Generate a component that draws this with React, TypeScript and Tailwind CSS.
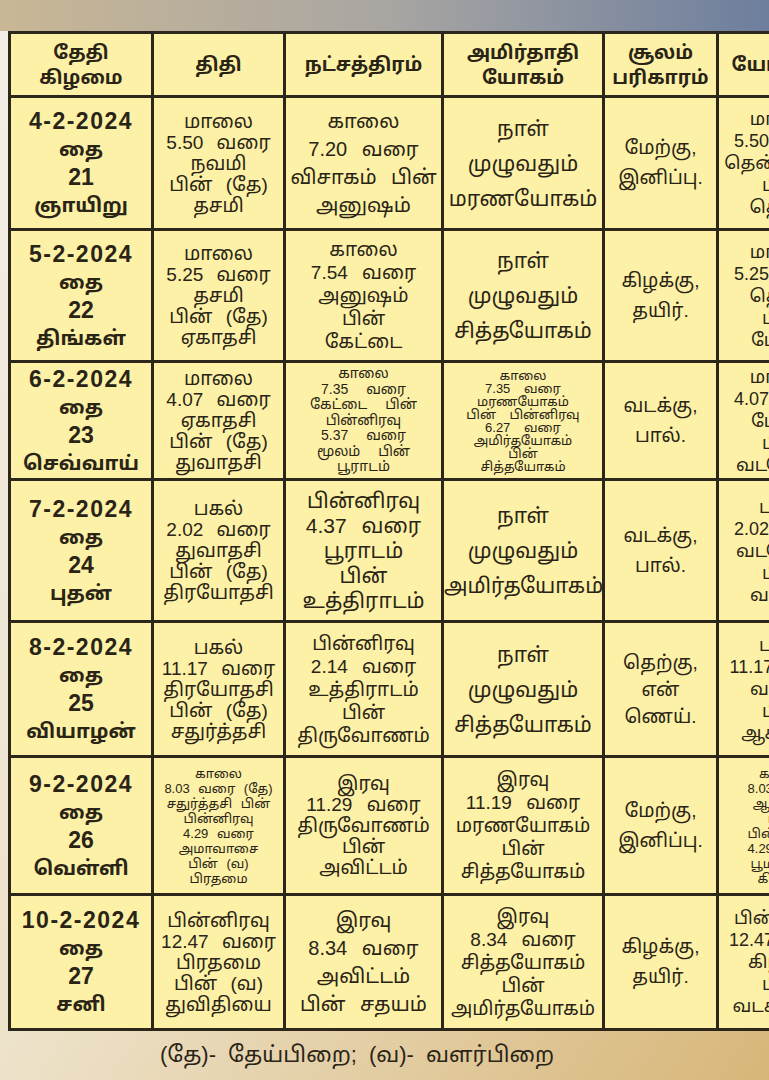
type Cell = { lines: string[]; cls: string };

// text styles per cell kind
const dateCls = "text-[20px] leading-[28px] font-bold";
const thithi = "text-[19px] leading-[21px] [word-spacing:8px]";
const thithiSmall = "text-[13px] leading-[15px] [word-spacing:5px]";
const nak4 = "text-[20px] leading-[28px] [word-spacing:9px]";
const nak5 = "text-[19px] leading-[23px] [word-spacing:9px]";
const nakSmall = "text-[14px] leading-[15.5px] [word-spacing:14px]";
const yoga3 = "text-[21px] leading-[35px]";
const yoga5 = "text-[19px] leading-[23px] [word-spacing:9px]";
const yogaSmall = "text-[13px] leading-[13px] [word-spacing:10px]";
const soolam = "text-[19px] leading-[30px]";
const soolam3 = "text-[19px] leading-[27px]";
const yogini = "text-[18px] leading-[22px] [word-spacing:6px]";
const yoginiSmall = "text-[13px] leading-[15px] [word-spacing:4px]";

const rows: { h: string; cells: Cell[] }[] = [
  {
    h: "h-[133px]",
    cells: [
      { lines: ["4-2-2024", "தை", "21", "ஞாயிறு"], cls: dateCls },
      { lines: ["மாலை", "5.50 வரை", "நவமி", "பின் (தே)", "தசமி"], cls: thithi },
      { lines: ["காலை", "7.20 வரை", "விசாகம் பின்", "அனுஷம்"], cls: nak4 },
      { lines: ["நாள்", "முழுவதும்", "மரணயோகம்"], cls: yoga3 },
      { lines: ["மேற்கு,", "இனிப்பு."], cls: soolam },
      { lines: ["மாலை", "5.50 வரை", "தென்மேற்கு", "பின்", "தெற்கு"], cls: yogini },
    ],
  },
  {
    h: "h-[132px]",
    cells: [
      { lines: ["5-2-2024", "தை", "22", "திங்கள்"], cls: dateCls },
      { lines: ["மாலை", "5.25 வரை", "தசமி", "பின் (தே)", "ஏகாதசி"], cls: thithi },
      { lines: ["காலை", "7.54 வரை", "அனுஷம்", "பின்", "கேட்டை"], cls: nak5 },
      { lines: ["நாள்", "முழுவதும்", "சித்தயோகம்"], cls: yoga3 },
      { lines: ["கிழக்கு,", "தயிர்."], cls: soolam },
      { lines: ["மாலை", "5.25 வரை", "தெற்கு", "பின்", "மேற்கு"], cls: yogini },
    ],
  },
  {
    h: "h-[118px]",
    cells: [
      { lines: ["6-2-2024", "தை", "23", "செவ்வாய்"], cls: dateCls },
      { lines: ["மாலை", "4.07 வரை", "ஏகாதசி", "பின் (தே)", "துவாதசி"], cls: thithi },
      {
        lines: ["காலை", "7.35 வரை", "கேட்டை பின்", "பின்னிரவு", "5.37 வரை", "மூலம் பின்", "பூராடம்"],
        cls: nakSmall,
      },
      {
        lines: ["காலை", "7.35 வரை", "மரணயோகம்", "பின் பின்னிரவு", "6.27 வரை", "அமிர்தயோகம்", "பின்", "சித்தயோகம்"],
        cls: yogaSmall,
      },
      { lines: ["வடக்கு,", "பால்."], cls: soolam },
      { lines: ["மாலை", "4.07 வரை", "மேற்கு", "பின்", "வடமேற்கு"], cls: yogini },
    ],
  },
  {
    h: "h-[142px]",
    cells: [
      { lines: ["7-2-2024", "தை", "24", "புதன்"], cls: dateCls },
      { lines: ["பகல்", "2.02 வரை", "துவாதசி", "பின் (தே)", "திரயோதசி"], cls: thithi },
      { lines: ["பின்னிரவு", "4.37 வரை", "பூராடம்", "பின்", "உத்திராடம்"], cls: "text-[21px] leading-[25px] [word-spacing:9px]" },
      { lines: ["நாள்", "முழுவதும்", "அமிர்தயோகம்"], cls: yoga3 },
      { lines: ["வடக்கு,", "பால்."], cls: soolam },
      { lines: ["பகல்", "2.02 வரை", "வடமேற்கு", "பின்", "வடக்கு"], cls: yogini },
    ],
  },
  {
    h: "h-[135px]",
    cells: [
      { lines: ["8-2-2024", "தை", "25", "வியாழன்"], cls: dateCls },
      { lines: ["பகல்", "11.17 வரை", "திரயோதசி", "பின் (தே)", "சதுர்த்தசி"], cls: thithi },
      { lines: ["பின்னிரவு", "2.14 வரை", "உத்திராடம்", "பின்", "திருவோணம்"], cls: nak5 },
      { lines: ["நாள்", "முழுவதும்", "சித்தயோகம்"], cls: yoga3 },
      { lines: ["தெற்கு,", "என்", "ணெய்."], cls: soolam3 },
      { lines: ["பகல்", "11.17 வரை", "வடக்கு", "பின்", "ஆகாயம்"], cls: yogini },
    ],
  },
  {
    h: "h-[138px]",
    cells: [
      { lines: ["9-2-2024", "தை", "26", "வெள்ளி"], cls: dateCls },
      {
        lines: ["காலை", "8.03 வரை (தே)", "சதுர்த்தசி பின்", "பின்னிரவு", "4.29 வரை", "அமாவாசை", "பின் (வ)", "பிரதமை"],
        cls: thithiSmall,
      },
      { lines: ["இரவு", "11.29 வரை", "திருவோணம்", "பின்", "அவிட்டம்"], cls: "text-[19px] leading-[21px] [word-spacing:9px]" },
      { lines: ["இரவு", "11.19 வரை", "மரணயோகம்", "பின்", "சித்தயோகம்"], cls: yoga5 },
      { lines: ["மேற்கு,", "இனிப்பு."], cls: soolam },
      {
        lines: ["காலை", "8.03 வரை", "ஆகாயம்", "பின்", "பின்னிரவு", "4.29 வரை", "பூமி பின்", "கிழக்கு"],
        cls: yoginiSmall,
      },
    ],
  },
  {
    h: "h-[135px]",
    cells: [
      { lines: ["10-2-2024", "தை", "27", "சனி"], cls: dateCls },
      { lines: ["பின்னிரவு", "12.47 வரை", "பிரதமை", "பின் (வ)", "துவிதியை"], cls: thithi },
      { lines: ["இரவு", "8.34 வரை", "அவிட்டம்", "பின் சதயம்"], cls: nak4 },
      { lines: ["இரவு", "8.34 வரை", "சித்தயோகம்", "பின்", "அமிர்தயோகம்"], cls: yoga5 },
      { lines: ["கிழக்கு,", "தயிர்."], cls: soolam },
      { lines: ["பின்னிரவு", "12.47 வரை", "கிழக்கு", "பின்", "வடகிழக்கு"], cls: yogini },
    ],
  },
];

const headers = [
  ["தேதி", "கிழமை"],
  ["திதி"],
  ["நட்சத்திரம்"],
  ["அமிர்தாதி", "யோகம்"],
  ["சூலம்", "பரிகாரம்"],
  ["யோகினி"],
];

const colWidths = ["w-[143px]", "w-[132px]", "w-[158px]", "w-[161px]", "w-[114px]", "w-[130px]"];

// first column: numbers are set larger and spaced out
function dateLine(l: string, j: number) {
  if (j === 0) return "whitespace-nowrap text-[23px] tracking-[1.5px]";
  if (j === 2) return "whitespace-nowrap text-[23px]";
  return "whitespace-nowrap";
}

export default function App() {
  return (
    <div className="w-[769px] h-[1080px] overflow-hidden bg-linear-to-br from-[#f3efe8] via-[#ede2c9] to-[#d7b678] font-['Liberation_Sans','Noto_Sans_Tamil','Noto_Sans',sans-serif] text-[#2a2416]">
      <div className="h-[31px] bg-linear-to-r from-[#c9b795] via-[#a9a6a2] to-[#6d7e9d]" />
      <div className="pl-[8px]">
        <table className="table-fixed border-collapse bg-[#fcf1a6] w-[838px]">
          <colgroup>
            {colWidths.map((w, i) => (
              <col key={i} className={w} />
            ))}
          </colgroup>
          <thead>
            <tr className="h-[64px]">
              {headers.map((lines, i) => (
                <th
                  key={i}
                  className="border-[3px] border-[#2c271a] text-center align-middle font-bold text-[19px] leading-[25px] px-0"
                >
                  {lines.map((l, j) => (
                    <div key={j} className="whitespace-nowrap">{l}</div>
                  ))}
                </th>
              ))}
            </tr>
          </thead>
          <tbody>
            {rows.map((row, r) => (
              <tr key={r} className={row.h}>
                {row.cells.map((cell, c) => (
                  <td
                    key={c}
                    className={`border-[3px] border-[#2c271a] text-center align-middle px-0 ${cell.cls}`}
                  >
                    {cell.lines.map((l, j) => (
                      <div key={j} className={c === 0 ? dateLine(l, j) : "whitespace-nowrap"}>
                        {l}
                      </div>
                    ))}
                  </td>
                ))}
              </tr>
            ))}
          </tbody>
        </table>
      </div>
      <p className="pt-[10px] pl-[160px] text-[22px] leading-[28px] whitespace-nowrap [word-spacing:6px]">
        (தே)- தேய்பிறை; (வ)- வளர்பிறை
      </p>
    </div>
  );
}
